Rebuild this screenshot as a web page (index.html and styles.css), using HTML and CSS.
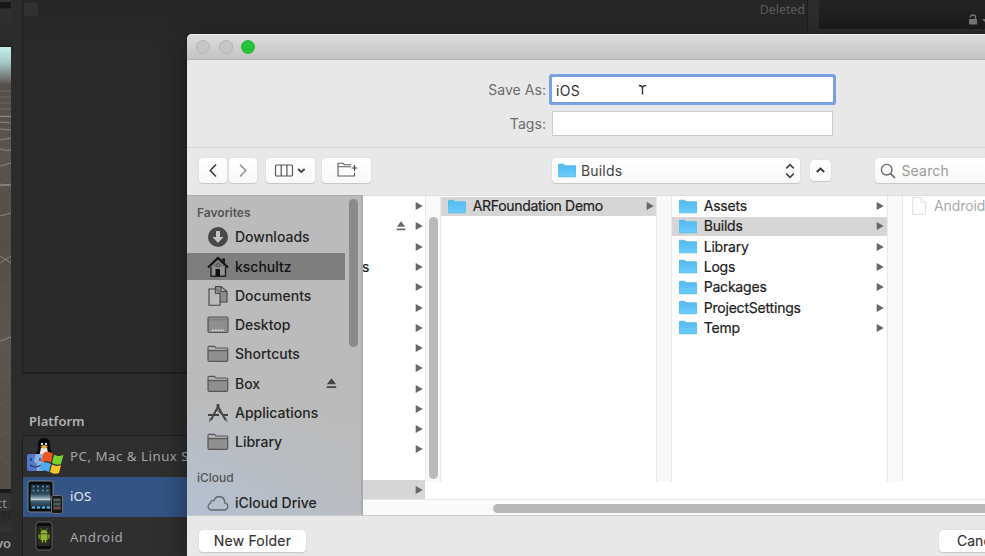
FILE: index.html
```html
<!DOCTYPE html>
<html lang="en">
<head>
<meta charset="utf-8">
<title>Save As</title>
<link rel="stylesheet" href="styles.css">
</head>
<body>
<svg class="defs" aria-hidden="true">
  <defs>
    <linearGradient id="blue" x1="0" y1="0" x2="0" y2="1"><stop offset="0" stop-color="#55bdf3"/><stop offset="1" stop-color="#6ccbfb"/></linearGradient>
    <linearGradient id="wall" x1="0" y1="0" x2="0" y2="1"><stop offset="0" stop-color="#14232e"/><stop offset=".4" stop-color="#2c4a5e"/><stop offset=".52" stop-color="#6f8c9b"/><stop offset=".62" stop-color="#c4cfd3"/><stop offset=".68" stop-color="#40617a"/><stop offset="1" stop-color="#152532"/></linearGradient>
    <symbol id="folder" viewBox="0 0 18 15"><path d="M0 2Q0 .7 1 .7H5.5L7.2 2.2H17Q18 2.2 18 3V13.5Q18 14.3 17 14.3H1Q0 14.3 0 13.5Z" fill="#5bbbea"/><path d="M.4 3.6H17.6V13.5H.4Z" fill="url(#blue)"/></symbol>
    <symbol id="arrow" viewBox="0 0 8 8"><path d="M.7.1 7.8 4 .7 7.9Z" fill="#686868"/></symbol>
    <symbol id="eject" viewBox="0 0 10 10"><path d="M5 .3 9.2 5.7H.8Z M.7 7.5H9.3V9.2H.7Z"/></symbol>
    <symbol id="grayfolder" viewBox="0 0 22 18"><path d="M1 15V2.5Q1 1.3 2 1.3H7.3L9 3H19.5Q20.7 3 20.7 4V15Q20.7 16.4 19.5 16.4H2.3Q1 16.4 1 15Z" fill="#8f8f8f" stroke="#555" stroke-width="1.2"/><path d="M1 5.7H20.7" stroke="#555" stroke-width="1.1"/><path d="M1.6 4.5V2H7L8.8 3.7H20V4.8Z" fill="#b2b2b2"/></symbol>
  </defs>
</svg>
<div class="screen">
  <aside class="scene">
    <div class="scene-head"></div>
    <svg class="scene-view" viewBox="0 0 11 404" preserveAspectRatio="none">
      <g fill="none" stroke="#a39f99" stroke-width=".9">
        <path d="M0 6H11M0 12H11M0 18H11M0 24H11M0 31H11" opacity=".35"/>
        <path d="M0 31.500H11M0 37 11 38M0 44 11 45M0 55 11 53M0 64Q5 66 11 65M0 81 11 78M0 99 11 101M0 101 11 99M0 131 11 128M0 171 11 178M0 178 11 171M0 256 11 252" opacity=".75"/>
        <path d="M0 200 11 208M0 223 11 213M0 295 11 285M0 318 11 327M0 352 11 344M0 372 11 382" opacity=".15"/>
      </g>
    </svg>
    <div class="scene-tab">ct</div>
    <div class="scene-bar"></div>
    <div class="scene-foot">vo</div>
  </aside>
  <main class="build">
    <div class="scenes"><span class="check"></span><span class="deleted">Deleted</span></div>
    <h2>Platform</h2>
    <div class="platforms">
      <div class="platform">
        <svg width="38" height="38" viewBox="0 0 38 38">
          <path d="M12 7Q12 1 18 1T24 7Q24 13 27 17Q29 21 25 21H12Q8 20 11 15Q13 12 12 7Z" fill="#080808"/>
          <path d="M15 11Q18 8 21 11L23 20H13Z" fill="#e9e9e5"/><circle cx="16" cy="7" r="1.2" fill="#ddd"/><circle cx="20" cy="7" r="1.2" fill="#ddd"/><path d="M14.500 9.500 18 8 22 9.500 18 12Z" fill="#efb01c"/>
          <rect x="1" y="17" width="17" height="17" rx="2" fill="#5478c6"/><path d="M10 17Q7 24 9 26H11Q10 30 11 34H16Q18 34 18 32V17Z" fill="#8eb0e9"/><path d="M5 21V24M14 21V24M4 28Q9 32 15 28" stroke="#17315f" fill="none" stroke-width="1.200"/>
          <path d="M17.500 16Q22 13.500 27 16.500L25 25.500Q20 22.500 15 25.500Z" fill="#ef5424"/><path d="M28 17.500Q33 20.500 37.500 17.500L35 27Q31 29 26 26Z" fill="#79cf2d"/><path d="M15 26.500Q20 24 25 27L23 35Q18 32 13 34Z" fill="#4dabef"/><path d="M26 27.500Q31 30 35 28L33 36Q28 38 24 35Z" fill="#ffc52b"/>
        </svg>
        <span>PC, Mac &amp; Linux Standalone</span>
      </div>
      <div class="platform active">
        <svg width="38" height="38" viewBox="0 0 38 38">
          <rect x="2" y="3" width="25" height="31" rx="2.500" fill="#07090b" stroke="#79828b"/><rect x="4.500" y="6" width="20" height="25" fill="url(#wall)"/>
          <path d="M6.500 8.500H8.500M11 8.500H13M16 8.500H18M20.500 8.500H22.500M6.500 12.500H8.500M11 12.500H13M16 12.500H18M20.500 12.500H22.500" stroke="#6d92b7" stroke-width="1.600"/><path d="M6 29.500H9M11 29.500H14M16 29.500H19M21 29.500H24" stroke="#55b9e0" stroke-width="1.800"/>
          <rect x="25.500" y="17.500" width="11" height="18" rx="2" fill="#161616" stroke="#75716b"/><rect x="27" y="20" width="8" height="12" fill="#31393c"/><path d="M28 22H34M28 26H34" stroke="#6a8589" stroke-width="1.500" stroke-dasharray="1.500 .7"/><path d="M28 30H34" stroke="#b45a4d" stroke-width="1.500" stroke-dasharray="1.500 .7"/>
        </svg>
        <span class="ios">iOS</span>
      </div>
      <div class="platform">
        <svg width="38" height="38" viewBox="0 0 38 38">
          <rect x="10" y="4" width="16" height="28" rx="3" fill="#0c0c0c" stroke="#66635f"/><rect x="11.500" y="8" width="13" height="20" fill="#292c24"/>
          <path d="M14.500 15.500Q14.500 12 18 12T21.500 15.500ZM14.500 16.300H21.500V22H20.300V24.500H18.800V22H17.200V24.500H15.700V22H14.500ZM12.500 16.500H13.700V20.500H12.500ZM22.300 16.500H23.500V20.500H22.300Z" fill="#91b52a"/><path d="M15 10.500 16.300 12.500M21 10.500 19.700 12.500" stroke="#91b52a" stroke-width=".7"/>
        </svg>
        <span>Android</span>
      </div>
    </div>
  </main>
  <aside class="inspector">
    <svg width="20" height="12" viewBox="0 0 20 12"><path d="M5.200 3.500Q5.500 1 8 1T10.500 3.500V5" fill="none" stroke="#777" stroke-width="1.400"/><rect x="4" y="5" width="8" height="5.500" fill="#777"/><path d="M17 5H23L20 8Z" fill="#777"/></svg>
  </aside>
</div>

<section class="dialog">
  <header class="titlebar"><i></i><i></i><i class="green"></i></header>
  <div class="fields">
    <label>Save As:</label>
    <div class="input focus"><span>iOS</span><svg width="9" height="12" viewBox="0 0 9 12"><path d="M.8 1.500Q4.500 1.500 4.500 4Q4.500 1.500 8.200 1.500M4.500 3V10.500" fill="none" stroke="#333" stroke-width="1.400"/></svg></div>
    <label>Tags:</label>
    <div class="input"></div>
  </div>
  <div class="toolbar">
    <div class="btn back"><svg width="28" height="25" viewBox="0 0 28 25"><path d="M17 6.500 11.300 12.500 17 18.500" fill="none" stroke="#3e3e3e" stroke-width="1.700"/></svg></div>
    <div class="btn fwd"><svg width="28" height="25" viewBox="0 0 28 25"><path d="M11 6.500 16.700 12.500 11 18.500" fill="none" stroke="#999" stroke-width="1.700"/></svg></div>
    <div class="btn view"><svg width="49" height="25" viewBox="0 0 49 25"><path d="M9.500 8Q9.500 7 10.500 7H25.500Q26.500 7 26.500 8V17Q26.500 18 25.500 18H10.500Q9.500 18 9.500 17ZM15.200 7V18M20.900 7V18" fill="none" stroke="#555" stroke-width="1.200"/><path d="M32 11 35.300 14 38.600 11" fill="none" stroke="#444" stroke-width="1.800"/></svg></div>
    <div class="btn newf"><svg width="49" height="25" viewBox="0 0 49 25"><path d="M29 6.800H22.500L21 5.300H16V18H32.500V14.500M16 8.800H29" fill="none" stroke="#5c5c5c" stroke-width="1.100"/><path d="M32.500 7V13M29.500 10H35.500" stroke="#444" stroke-width="1.200"/></svg></div>
    <div class="btn popup"><svg class="f"><use href="#folder"/></svg><span>Builds</span><svg class="updown" width="10" height="16" viewBox="0 0 10 16"><path d="M1.200 5.300 5 1.700 8.800 5.300M1.200 10.700 5 14.300 8.800 10.700" fill="none" stroke="#444" stroke-width="1.600"/></svg></div>
    <div class="btn up"><svg width="21" height="21" viewBox="0 0 21 21"><path d="M6.800 12 10.500 8.500 14.200 12" fill="none" stroke="#333" stroke-width="1.800"/></svg></div>
    <div class="btn search"><svg width="16" height="16" viewBox="0 0 16 16"><circle cx="6.700" cy="6.700" r="5.300" fill="none" stroke="#666" stroke-width="1.300"/><path d="M10.600 10.600 15 15" stroke="#666" stroke-width="1.600"/></svg><span>Search</span></div>
  </div>
  <div class="browser">
    <nav class="sidebar">
      <div class="list">
        <h3>Favorites</h3>
        <div class="item"><svg viewBox="0 0 22 22"><circle cx="11" cy="11" r="10" fill="#484848"/><path d="M9 5H13V11H16.500L11 17 5.500 11H9Z" fill="#c4c4c4"/></svg><span>Downloads</span></div>
        <div class="item sel"><svg viewBox="0 0 22 22"><path d="M4 11V20.300H18.500V11" fill="#929292" stroke="#242424" stroke-width="1.400"/><path d="M1 11.500 11 2 21 11.500" fill="none" stroke="#111" stroke-width="2"/><path d="M15 2.500H18V7L15 4ZM8.500 13H13V20H8.500Z" fill="#111"/><circle cx="11" cy="9.300" r="1.800" fill="none" stroke="#444" stroke-width=".8"/></svg><span>kschultz</span></div>
        <div class="item"><svg viewBox="0 0 22 22"><path d="M8.500 1.500H14L20 6.500V17H8.500ZM14 1.500V6.500H20" fill="#8d8d8d" stroke="#444" stroke-width="1.100"/><path d="M2 4H8.300L13 8.500V20.300H2Z" fill="#bababa" stroke="#444" stroke-width="1.100"/><path d="M8.300 4V8.500H13" fill="#999" stroke="#444"/></svg><span>Documents</span></div>
        <div class="item"><svg viewBox="0 0 22 22"><rect x="1" y="3" width="20" height="15.500" rx="1.500" fill="#8f8f8f" stroke="#555" stroke-width="1.200"/><path d="M1 5.800H21" stroke="#777"/><path d="M5 16.300H17" stroke="#ddd" stroke-width="1.600" stroke-dasharray="1.800 1"/></svg><span>Desktop</span></div>
        <div class="item"><svg viewBox="0 -2 22 22"><use href="#grayfolder" width="22" height="18"/></svg><span>Shortcuts</span></div>
        <div class="item"><svg viewBox="0 -2 22 22"><use href="#grayfolder" width="22" height="18"/></svg><span>Box</span><svg class="ej"><use href="#eject"/></svg></div>
        <div class="item"><svg viewBox="0 0 22 22"><path d="M10 2.500 18.500 18M12 2.500 4 18M1 13H12M16.500 13H21" fill="none" stroke="#444" stroke-width="1.900"/><path d="M3.500 16 2.500 19.500M18 15.500 20 19.500M10 7.500 15 12.500" fill="none" stroke="#555" stroke-width="1.200"/></svg><span>Applications</span></div>
        <div class="item"><svg viewBox="0 -2 22 22"><use href="#grayfolder" width="22" height="18"/></svg><span>Library</span></div>
        <h3 class="cloud">iCloud</h3>
        <div class="item"><svg viewBox="0 0 22 22"><path d="M5 18H17.200Q20.800 17.800 20.800 14.300Q20.800 11.300 17.700 10.800Q17.700 5 12.500 4.500Q8.500 4.500 7 8.500Q3.700 7.700 3.500 11.200Q1 12.200 1.200 15Q1.500 18 5 18Z" fill="none" stroke="#60656b" stroke-width="1.300"/></svg><span>iCloud Drive</span></div>
      </div>
      <div class="thumb"></div>
    </nav>
    <div class="finder">
      <div class="columns">
        <div class="col first">
          <div class="row"><svg class="a"><use href="#arrow"/></svg></div>
          <div class="row"><svg class="e"><use href="#eject"/></svg><svg class="a"><use href="#arrow"/></svg></div>
          <div class="row"><svg class="a"><use href="#arrow"/></svg></div>
          <div class="row"><span class="tail">s</span><svg class="a"><use href="#arrow"/></svg></div>
          <div class="row"><svg class="a"><use href="#arrow"/></svg></div>
          <div class="row"><svg class="a"><use href="#arrow"/></svg></div>
          <div class="row"><svg class="a"><use href="#arrow"/></svg></div>
          <div class="row"><svg class="a"><use href="#arrow"/></svg></div>
          <div class="row"><svg class="a"><use href="#arrow"/></svg></div>
          <div class="row"><svg class="a"><use href="#arrow"/></svg></div>
          <div class="row"><svg class="a"><use href="#arrow"/></svg></div>
          <div class="row"><svg class="a"><use href="#arrow"/></svg></div>
          <div class="row"><svg class="a"><use href="#arrow"/></svg></div>
          <div class="row"></div>
          <div class="row on"><svg class="a"><use href="#arrow"/></svg></div>
        </div>
        <div class="gutter"><div class="vthumb"></div></div>
        <div class="col second">
          <div class="row on"><svg class="f"><use href="#folder"/></svg><span>ARFoundation Demo</span><svg class="a"><use href="#arrow"/></svg></div>
        </div>
        <div class="gutter"></div>
        <div class="col third">
          <div class="row"><svg class="f"><use href="#folder"/></svg><span>Assets</span><svg class="a"><use href="#arrow"/></svg></div>
          <div class="row on"><svg class="f"><use href="#folder"/></svg><span>Builds</span><svg class="a"><use href="#arrow"/></svg></div>
          <div class="row"><svg class="f"><use href="#folder"/></svg><span>Library</span><svg class="a"><use href="#arrow"/></svg></div>
          <div class="row"><svg class="f"><use href="#folder"/></svg><span>Logs</span><svg class="a"><use href="#arrow"/></svg></div>
          <div class="row"><svg class="f"><use href="#folder"/></svg><span>Packages</span><svg class="a"><use href="#arrow"/></svg></div>
          <div class="row"><svg class="f"><use href="#folder"/></svg><span>ProjectSettings</span><svg class="a"><use href="#arrow"/></svg></div>
          <div class="row"><svg class="f"><use href="#folder"/></svg><span>Temp</span><svg class="a"><use href="#arrow"/></svg></div>
        </div>
        <div class="gutter"></div>
        <div class="col fourth">
          <div class="row dim"><svg width="14" height="18" viewBox="0 0 14 18"><path d="M.6.6H9L13.400 5V17.400H.6ZM9 .6V5H13.400" fill="#fff" stroke="#e0e0e0"/></svg><span>Android</span></div>
        </div>
      </div>
      <div class="hscroll"><div class="hthumb"></div></div>
    </div>
  </div>
  <footer><div class="push nf">New Folder</div><div class="push cancel">Cancel</div></footer>
</section>
</body>
</html>
```
FILE: styles.css
```css
* { box-sizing: border-box; }
html, body { margin: 0; width: 985px; height: 556px; overflow: hidden; }
body { position: relative; background: #292929; font: 14px/20px Inter, "Liberation Sans", sans-serif; color: #222; }
.defs { position: absolute; width: 0; height: 0; }
svg { display: block; flex: none; }
span { white-space: nowrap; }

.screen { display: grid; grid-template-columns: 11px 808px 1fr; height: 556px; overflow: hidden; font-family: "Noto Sans", "Open Sans", sans-serif; color: #a5a5a5; }
.scene { overflow: hidden; background: #2c2c2c; display: flex; flex-direction: column; font-size: 13px; }
.scene-head { height: 47px; flex: none; background: linear-gradient(#333 0 2px, #181818 2px 8px, #303030 9px, #292929 45px, #222 46px); }
.scene-view { width: 11px; height: 442px; flex: none; padding-top: 38px; background: linear-gradient(#c5eeee 0, #aacaca 15px, #777c7c 30px, #554f4b 38px, #5a534e 100px, #544f47 200px, #5c554f 300px, #544e46 442px); }
.scene-tab { height: 22px; flex: none; border-top: 4px solid #1b1b1b; background: #333; line-height: 20px; text-indent: -4px; color: #8c8c8c; }
.scene-bar { height: 21px; flex: none; margin-left: 1px; background: linear-gradient(#252525, #333); }
.scene-foot { font-weight: 600; line-height: 22px; text-indent: -4px; }
.build { background: #2c2c2c; overflow: hidden; }
.scenes { display: flex; justify-content: space-between; margin-left: 11px; width: 786px; height: 374px; padding: 3px 2px 0 7px; border: solid #202020; border-width: 0 1px 1px; border-bottom-width: 2px; background: linear-gradient(#262626, #2a2a2a 60px); }
.check { width: 14px; height: 13px; margin-left: -6px; border: 1px solid #333; border-radius: 2px; background: #303030; }
.deleted { margin-top: -3px; font-size: 12.500px; color: #5b5b5b; letter-spacing: -.050px; }
.build h2 { margin: 37px 0 4px 18px; height: 20px; font-size: 13px; line-height: 20px; font-weight: 600; color: #b2b2b2; }
.platforms { margin-left: 11px; border: 1px solid #1e1e1e; width: 786px; background: #2f2f2f; }
.platform { display: flex; align-items: center; height: 40.500px; padding-left: 3px; gap: 6px; font-size: 13.300px; letter-spacing: .500px; }
.platform span { margin-top: -1px; }
.active { background: #345485; color: #e2e7f0; }
.ios { letter-spacing: .100px; }
.inspector { height: 31px; border-bottom: 2px solid #2e2e2e; background: linear-gradient(#242424, #1c1c1c); padding: 14px 0 0 146px; }

/* Save sheet, floating over the editor */
.dialog { position: absolute; left: 187px; top: 34px; width: 798px; height: 522px; border-radius: 5px 0 0 0; background: #e8e8e8; box-shadow: 0 8px 30px rgba(0,0,0,.45); overflow: hidden; display: flex; flex-direction: column; }
.titlebar { display: flex; gap: 8.500px; height: 26px; flex: none; padding: 5px 0 0 9px; background: linear-gradient(#dcdcdc, #c4c4c4); border-top: 1px solid #eee; border-bottom: 1px solid #b3b3b3; }
.titlebar i { width: 14px; height: 14px; border-radius: 50%; background: #c6c6c6; border: 1px solid #b3b3b3; }
.titlebar .green { background: #27c13a; border-color: #25b737; }
.fields { display: grid; grid-template-columns: 359px 281px; column-gap: 6px; row-gap: 9px; height: 88px; flex: none; padding-top: 17px; grid-template-rows: 25px 25px; border-bottom: 1px solid #d2d2d2; }
.fields label { text-align: right; line-height: 25px; color: #6b6b6b; letter-spacing: .050px; }
.input { background: #fff; border: 1px solid #ccc; }
.focus { display: flex; border-color: #fff; box-shadow: 0 0 0 3px #79a0e2; border-radius: 1px; padding-left: 3px; line-height: 25px; color: #333; letter-spacing: .300px; }
.focus svg { margin: 6px 0 0 58.500px; }
.toolbar { display: flex; align-items: center; height: 47px; flex: none; padding: 0 0 2px 12.400px; overflow: hidden; }
.btn { display: flex; flex: none; align-items: center; height: 25px; background: linear-gradient(#fff, #f8f8f8); border-radius: 4px; box-shadow: 0 0 1px #bbb, 0 1px 1px #c6c6c6; }
.back { width: 28px; } .fwd { width: 28px; margin-left: 2px; }
.view { width: 49px; margin-left: 9px; } .newf { width: 49px; margin-left: 7px; }
.popup { width: 248px; margin-left: 180.500px; padding: 0 5px 0 6px; color: #444; letter-spacing: .200px; }
.popup span { margin-left: 5px; } .updown { margin-left: auto; }
.up { width: 21px; height: 21px; margin-left: 10px; }
.search { width: 160px; margin-left: 44.500px; padding-left: 5px; gap: 5px; color: #999; letter-spacing: .200px; }
.browser { display: flex; height: 321px; flex: none; border-bottom: 1px solid #cacaca; }
.sidebar { display: flex; width: 176px; flex: none; border-right: 2px solid #aaa; background: linear-gradient(190deg, rgba(187,187,187,1) 65%, rgba(187,187,187,0) 95%), linear-gradient(90deg, #b4c0d0, #b9bdc2); border-top: 1px solid #ababab; overflow: hidden; }
.list { width: 158px; flex: none; }
.list h3 { margin: 0; padding: 7px 0 0 10px; height: 27.750px; font-size: 12px; line-height: 20px; font-weight: 600; color: #555; }
.list .cloud { padding-top: 10.500px; height: 31.500px; font-weight: 500; }
.item { display: flex; align-items: center; height: 27.250px; margin-bottom: 2px; padding-left: 20px; gap: 6px; color: #252525; font-weight: 500; }
.item > svg { width: 22px; height: 22px; }
.item.sel { background: #7e7e7e; color: #111; }
.item .ej { width: 11px; height: 11px; margin-left: auto; margin-right: 8px; fill: #444; }
.thumb { width: 9px; height: 148px; margin: 3px 0 0 4px; border-radius: 5px; background: #8a8a8a; }
.finder { flex: 1; background: #fff; display: flex; flex-direction: column; border-top: 1px solid #ddd; min-width: 0; }
.columns { display: flex; height: 303px; overflow: hidden; }
.col { display: flex; flex: none; flex-direction: column; gap: 1.270px; padding-top: .700px; }
.first { width: 62px; } .second, .third { width: 215px; } .fourth { width: 82px; overflow: hidden; }
.row { display: flex; flex: none; align-items: center; height: 19px; padding: 0 2.500px 0 7px; letter-spacing: -.200px; -webkit-text-stroke: .200px; }
.second .row { letter-spacing: -.300px; }
.third .row { padding-right: 3px; }
.on { background: #d6d6d6; }
.f { width: 18px; height: 15px; }
.row .f { margin-right: 6.700px; }
.a { width: 8px; height: 8px; margin-left: auto; }
.e { width: 10px; height: 10px; margin-left: 25.500px; fill: #6b6b6b; }
.tail { margin-left: -8px; }
.gutter { width: 16px; height: 286px; background: #f9f9f9; border: solid #e8e8e8; border-width: 0 1px; flex: none; padding: 21px 0 0 3px; }
.vthumb { width: 9px; height: 262px; border-radius: 5px; background: #b9b9b9; }
.row.dim { color: #aaa; gap: 8px; padding-left: 9px; letter-spacing: -.100px; -webkit-text-stroke: 0; }
.hscroll { flex: 1; background: #fafafa; border-top: 1px solid #e6e6e6; padding: 4px 0 0 130px; }
.hthumb { height: 9px; border-radius: 5px 0 0 5px; background: #b9b9b9; }
footer { display: flex; padding: 14px 0 0 12px; }
.push { flex: none; height: 22px; background: #fff; border-radius: 4px; box-shadow: 0 0 1px #aaa, 0 1px 1px #ccc; text-align: center; line-height: 22px; color: #333; -webkit-text-stroke: .150px; }
.nf { width: 107px; letter-spacing: .200px; }
.cancel { width: 83px; margin-left: 632.500px; }
```
